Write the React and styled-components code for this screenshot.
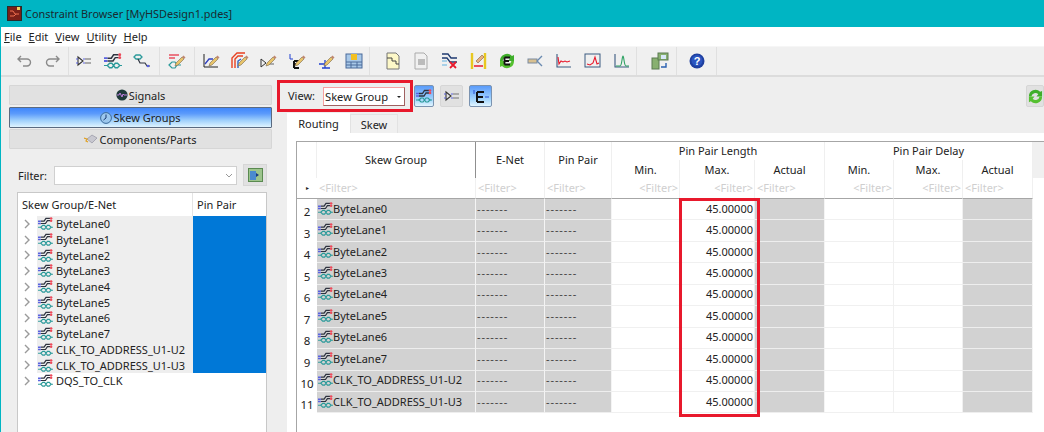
import React from 'react';
import styled, { createGlobalStyle } from 'styled-components';

const GlobalStyle = createGlobalStyle`
  html, body {
    margin: 0;
    padding: 0;
    background: #eee;
    overflow: hidden;
  }
  * { box-sizing: border-box; }
`;

const Window = styled.div`
  width: 1044px;
  height: 432px;
  display: flex;
  flex-direction: column;
  overflow: hidden;
  border-left: 1px solid #00b5c3;
  font-family: "Noto Sans", "Open Sans", sans-serif;
  font-size: 11px;
  color: #222;
  background: #eee;
`;

const TitleBar = styled.div`
  height: 27px;
  margin-left: -1px;
  display: flex;
  align-items: center;
  gap: 3px;
  padding-left: 7px;
  background: #00b5c3;
  color: #1a2a30;
  font-size: 10.9px;
`;

const MenuBar = styled.div`
  height: 19px;
  display: flex;
  align-items: center;
  gap: 7px;
  padding-left: 3px;
  background: #fff;
  u { text-underline-offset: 1px; }
`;

const Toolbar = styled.div`
  height: 31px;
  display: flex;
  align-items: center;
  background: #f0f0f0;
  border-top: 1px solid #f6f6f6;
  border-bottom: 2px solid #dcdcdc;
`;

const ToolGroup = styled.div`
  height: 100%;
  display: flex;
  align-items: center;
  width: ${p => p.$width}px;
  padding-left: ${p => p.$pad}px;
  border-right: 1px solid #e0e0e0;
`;

const ToolButton = styled.div`
  width: 28.6px;
  flex: none;
  display: flex;
  justify-content: center;
  align-items: center;
`;

const Body = styled.div`
  flex: 1;
  display: flex;
  min-height: 0;
`;

const LeftPanel = styled.div`
  width: 279px;
  flex: none;
  display: flex;
  flex-direction: column;
  padding: 8px 8px 0 8px;
`;

const NavButton = styled.div`
  height: ${p => (p.$active ? 21 : 20)}px;
  margin-bottom: ${p => (p.$active ? 1 : 2)}px;
  display: flex;
  align-items: center;
  justify-content: center;
  gap: 1px;
  border-radius: 1px;
  background: ${p => (p.$active
    ? 'linear-gradient(#3f86fb 0%, #5c9bfb 30%, #9fd0fb 65%, #dff4ff 100%)'
    : '#e1e1e1')};
  border: 1px solid ${p => (p.$active ? '#5a6a80' : '#d6d6d6')};
`;

const FilterRow = styled.div`
  display: flex;
  align-items: center;
  margin: 13px 0 6px 9px;
  height: 22px;
`;

const FilterLabel = styled.span`
  width: 36px;
`;

const FilterCombo = styled.div`
  width: 183px;
  height: 19px;
  display: flex;
  align-items: center;
  justify-content: flex-end;
  padding-right: 3px;
  background: #fff;
  border: 1px solid #d0d0d0;
`;

const SquareButton = styled.div`
  width: 24px;
  height: 22px;
  margin-left: 6px;
  display: flex;
  align-items: center;
  justify-content: center;
  background: #e1e1e1;
  border: 1px solid #d6d6d6;
`;

const Tree = styled.div`
  width: 250px;
  margin-left: 8px;
  flex: 1;
  background: #fff;
  border: 1px solid #c8c8c8;
  border-bottom: none;
`;

const TreeHeader = styled.div`
  height: 23px;
  display: flex;
  align-items: center;
  background: #fff;
`;

const TreeHeadCell = styled.div`
  width: ${p => p.$width}px;
  height: 100%;
  display: flex;
  align-items: center;
  padding-left: 4px;
  border-right: ${p => (p.$divide ? '1px solid #e4e4e4' : 'none')};
`;

const TreeRow = styled.div`
  height: 15.7px;
  display: flex;
  align-items: center;
`;

const Chevron = styled.div`
  width: 19px;
  flex: none;
  display: flex;
  justify-content: center;
`;

const TreeName = styled.div`
  width: 156px;
  height: 100%;
  flex: none;
  display: flex;
  align-items: center;
  gap: 3px;
  padding-left: 1px;
  background: ${p => (p.$filled ? '#eeeeee' : 'transparent')};
  white-space: nowrap;
`;

const TreePin = styled.div`
  flex: 1;
  height: 100%;
  background: ${p => (p.$filled ? '#0078d7' : 'transparent')};
`;

const RightPanel = styled.div`
  flex: 1;
  min-width: 0;
  position: relative;
  display: flex;
  flex-direction: column;
  padding-left: 7px;
`;

const ViewRow = styled.div`
  height: 37px;
  display: flex;
  align-items: flex-start;
  padding-top: 8px;
`;

const ViewLabel = styled.span`
  width: 36px;
  line-height: 22px;
  padding-left: 1px;
`;

const ViewCombo = styled.div`
  width: 82px;
  height: 19px;
  margin-top: 2px;
  display: flex;
  align-items: center;
  justify-content: space-between;
  padding: 0 3px 0 1px;
  background: #fff;
  font-size: 11.2px;
  border: 1px solid #f7a0a0;
  border-right-color: #a06060;
  border-bottom-color: #a06060;
`;

const ViewCaret = styled.span`
  width: 0;
  height: 0;
  border-left: 2px solid transparent;
  border-right: 2px solid transparent;
  border-top: 2px solid #222;
`;

const ViewButton = styled.div`
  width: ${p => p.$width || 23}px;
  height: 22px;
  margin-left: ${p => p.$gap}px;
  display: flex;
  align-items: center;
  justify-content: center;
  flex: none;
  border: 1px solid ${p => (p.$on ? '#7b93b0' : '#d6d6d6')};
  border-radius: 2px;
  background: ${p => (p.$on ? 'linear-gradient(#5a9bfb, #a8d8fc 70%, #e2f5ff)' : '#e1e1e1')};
`;

const Spacer = styled.div`
  flex: 1;
`;

const RedBox = styled.div`
  position: absolute;
  left: ${p => p.$left}px;
  top: ${p => p.$top}px;
  width: ${p => p.$width}px;
  height: ${p => p.$height}px;
  border: 3px solid #e8192c;
  pointer-events: none;
`;

const Tabs = styled.div`
  height: 19px;
  display: flex;
  align-items: flex-end;
`;

const Tab = styled.div`
  width: ${p => p.$width}px;
  height: ${p => (p.$active ? 20 : 19)}px;
  display: flex;
  align-items: center;
  justify-content: center;
  background: ${p => (p.$active ? '#fff' : '#f0f0f0')};
  border: ${p => (p.$active ? 'none' : '1px solid #e2e2e2')};
  border-bottom: none;
`;

const TabPane = styled.div`
  flex: 1;
  background: #fff;
  padding: 8px 0 0 9px;
`;

const TableFrame = styled.div`
  position: relative;
  height: 100%;
  border-left: 1px solid #a6a6a6;
  border-top: 1px solid #a6a6a6;
  background: #fff;
`;

const TableGrid = styled.div`
  position: relative;
  display: grid;
  grid-template-columns: 20px 159px 69px 67px 68px 75px 70px 69px 69px 70px;
  grid-template-rows: 18px 18px 21px repeat(10, 21.44px);
`;

const HeaderFill = styled.div`
  position: absolute;
  left: 736px;
  right: 0;
  top: 0;
  height: 36px;
  background: #f0f0f0;
`;

const HeadCell = styled.div`
  grid-column: ${p => p.$col} / span ${p => p.$span || 1};
  grid-row: ${p => p.$row} / span ${p => p.$rows || 1};
  display: flex;
  align-items: center;
  justify-content: center;
  padding-bottom: ${p => (p.$row === 1 ? 2 : 0)}px;
  background: #fff;
  border-right: 1px solid ${p => (p.$strong ? '#8f8f8f' : '#efefef')};
`;

const FilterCell = styled.div`
  grid-column: ${p => p.$col};
  grid-row: 3;
  display: flex;
  align-items: center;
  justify-content: ${p => (p.$right ? 'flex-end' : 'flex-start')};
  padding: 0 1px 2px 2px;
  color: #cfcfcf;
  background: #fff;
  border-right: 1px solid #f0f0f0;
  border-bottom: 1px solid #a6a6a6;
`;

const Corner = styled.div`
  grid-column: 1;
  grid-row: 3;
  display: flex;
  align-items: center;
  justify-content: center;
  font-size: 6px;
  border-bottom: 1px solid #a6a6a6;
`;

const RowNumber = styled.div`
  grid-column: 1;
  display: flex;
  align-items: flex-end;
  justify-content: center;
  padding-bottom: 1px;
  font-size: 11.5px;
`;

const DataCell = styled.div`
  display: flex;
  align-items: center;
  justify-content: ${p => (p.$right ? 'flex-end' : 'flex-start')};
  padding: 0 1px 2px;
  white-space: nowrap;
  overflow: hidden;
  background: ${p => (p.$gray ? '#d2d2d2' : '#fff')};
  border-right: 1px solid ${p => (p.$gray ? '#f4f4f4' : '#f0f0f0')};
  border-bottom: 1px solid ${p => (p.$gray ? '#eeeeee' : '#f0f0f0')};
`;

const Dashes = styled.span`
  letter-spacing: 0.9px;
  color: #444;
`;

const SkewIcon = ({ size = 15 }) => (
  <svg width={size} height={size} viewBox="0 0 16 16" fill="none" style={{ flex: 'none' }}>
    <path d="M3 5.5h3.5l2-3H13M3 8h5l2-3h3" stroke="#2e3440" strokeWidth="1.3" />
    <path d="M0 5.5h3M0 8h3" stroke="#5a62e0" strokeWidth="1.6" />
    <circle cx="14" cy="2.5" r="1.3" fill="#ec4a5a" />
    <circle cx="14" cy="5" r="1.3" fill="#ec4a5a" />
    <path d="M3 12l2-2h2l1.5 2L7 14H5zM8.5 12l1.5-2h2l2 2-2 2h-2z" stroke="#2b9a9a" strokeWidth="1.2" />
    <path d="M0 12h3M14 12h2" stroke="#2b9a9a" />
  </svg>
);

const NetIcon = () => (
  <svg width="16" height="14" viewBox="0 0 16 14" fill="none">
    <path d="M2 3v8l5-4z" stroke="#333" strokeWidth="1.1" />
    <path d="M0 5h2M0 9h2M7 5h2M7 9h2" stroke="#5a62e0" />
    <rect x="9" y="4" width="6" height="2" fill="#aaa" />
    <rect x="9" y="8" width="6" height="2" fill="#aaa" />
  </svg>
);

const EIcon = () => (
  <svg width="16" height="16" viewBox="0 0 16 16" fill="none">
    <path d="M1 2v4" stroke="#2a4fd0" />
    <path d="M12 9h4" stroke="#2a4fd0" />
    <path d="M4 4h7M4 4v10M4 9h6M4 14h7" stroke="#111" strokeWidth="2" />
  </svg>
);

const Pencil = () => (
  <>
    <path d="M8 11l6-6 2 2-6 6-3 1z" fill="#e8c46a" stroke="#7a6a50" strokeWidth=".6" />
    <path d="M14 5l1.5-1.5 2 2L16 7z" fill="#c08870" />
  </>
);

const Drawing = ({ children }) => (
  <svg width="18" height="18" viewBox="0 0 18 18" fill="none">{children}</svg>
);

const UndoIcon = ({ flip }) => (
  <svg width="15" height="12" viewBox="0 0 15 12" fill="none" style={{ transform: flip ? 'scaleX(-1)' : 'none' }}>
    <path d="M4 1L1 4l3 3M1 4h9a3.5 3.5 0 010 7H6" stroke="#8a8a8a" strokeWidth="1.4" />
  </svg>
);

const Wave = ({ d, color = '#e8192c' }) => (
  <Drawing>
    <path d="M2 2v13h14" stroke="#3a5a80" strokeWidth="1.1" />
    <path d={d} stroke={color} strokeWidth="1.1" />
  </Drawing>
);

const Refresh = ({ size = 16, withE }) => (
  <svg width={size} height={size} viewBox="0 0 16 16" fill="none">
    <path d="M1 8a7 7 0 0112-5l2-1v6H9l2-2.4A4.4 4.4 0 003.6 8z" fill="#3fae2a" />
    <path d="M15 8a7 7 0 01-12 5l-2 1V8h6l-2 2.4A4.4 4.4 0 0012.4 8z" fill="#55c030" />
    {withE && <path d="M5.5 4.5H11M5.5 4.5v7M5.5 8H10M5.5 11.5H11" stroke="#111" strokeWidth="1.8" />}
  </svg>
);

const HelpIcon = () => (
  <svg width="16" height="16" viewBox="0 0 16 16">
    <circle cx="8" cy="8" r="7.5" fill="#1f3f9f" />
    <circle cx="8" cy="7.5" r="5.5" fill="#2a55c0" />
    <text x="8" y="12" textAnchor="middle" fontSize="11" fontWeight="700" fill="#fff" fontFamily="Liberation Sans">?</text>
  </svg>
);

const AppLogo = () => (
  <svg width="15" height="15" viewBox="0 0 15 15">
    <rect x=".5" y=".5" width="14" height="14" fill="#7a2018" stroke="#2a2a2a" />
    <path d="M3 5h3l2 3h4M3 10h4l2-2" stroke="#f07050" fill="none" />
    <rect x="10" y="1" width="3" height="3" fill="#f0d060" />
  </svg>
);

const ChevronIcon = () => (
  <svg width="7" height="10" viewBox="0 0 7 10" fill="none">
    <path d="M1 1l4 4-4 4" stroke="#9a9a9a" strokeWidth="1.4" />
  </svg>
);

const DownCaret = () => (
  <svg width="8" height="5" viewBox="0 0 8 5" fill="none">
    <path d="M1 1l3 3 3-3" stroke="#999" />
  </svg>
);

const PanelIcon = () => (
  <svg width="15" height="14" viewBox="0 0 15 14">
    <rect x=".5" y=".5" width="14" height="13" fill="#9cc48c" stroke="#5a8a50" />
    <rect x="2" y="3" width="6" height="9" fill="#4a8ad0" />
    <path d="M8 5l3 2-3 2z" fill="#1a3a80" />
  </svg>
);

const SignalsIcon = () => (
  <svg width="12" height="12" viewBox="0 0 12 12" fill="none">
    <circle cx="6" cy="6" r="5.6" fill="#1f3a3a" />
    <path d="M1 6h2l1-2 2 4 1-3 1 1h3" stroke="#c080e0" />
  </svg>
);

const ClockIcon = () => (
  <svg width="12" height="12" viewBox="0 0 12 12" fill="none">
    <circle cx="6" cy="6" r="5.4" fill="#9cc8ee" stroke="#3a6a9a" />
    <path d="M6 2.5V6L3.5 8" stroke="#1a3a70" />
  </svg>
);

const PartsIcon = () => (
  <svg width="14" height="12" viewBox="0 0 14 12">
    <path d="M3 6l5-4 5 3-5 5z" fill="#c8c8d0" stroke="#8a8a9a" strokeWidth=".6" />
    <path d="M0 5l3 1-1 2 2 1" stroke="#e0a020" fill="none" strokeWidth="1.2" />
  </svg>
);

const groups = [
  { width: 68, pad: 9, items: [<UndoIcon />, <UndoIcon flip />] },
  { width: 91, pad: 1, items: [
    <NetIcon />,
    <SkewIcon size={18} />,
    <Drawing><path d="M2 5l2-2h4l2 2-2 2H4z" stroke="#2b9a9a" strokeWidth="1.3" /><path d="M6 7l2 4h5l2 3h3" stroke="#2e3440" strokeWidth="1.2" /><circle cx="16" cy="14" r="1.3" fill="#5a62e0" /></Drawing>,
  ] },
  { width: 35, pad: 3, items: [<Drawing><path d="M1 3h10M1 6h6" stroke="#e85060" strokeWidth="1.3" /><path d="M1 13l3-3h3l2 3-2 3H4zM9 13h4" stroke="#2b9a9a" strokeWidth="1.2" /><Pencil /></Drawing>] },
  { width: 175, pad: 2, items: [
    <Drawing><path d="M2 2v13h14" stroke="#222" /><path d="M3 12l4-5h4" stroke="#3040c0" strokeWidth="1.3" /><Pencil /></Drawing>,
    <Drawing><path d="M1 16V6l5-5h8M4 16V7l3-3h5" stroke="#e84020" strokeWidth="1.4" /><path d="M7 16V9l3-2" stroke="#3060c0" strokeWidth="1.4" /><Pencil /></Drawing>,
    <Drawing><path d="M2 7v8l5-4z" stroke="#333" /><rect x="9" y="11" width="6" height="2" fill="#aaa" /><Pencil /></Drawing>,
    <Drawing><path d="M2 2v5h3" stroke="#2040d0" /><path d="M6 9h5M6 9v7M6 12h4M6 16h5" stroke="#111" strokeWidth="2" /><Pencil /></Drawing>,
    <Drawing><path d="M2 12h6v4M5 16h8M8 12V8" stroke="#2040d0" strokeWidth="1.3" /><Pencil /></Drawing>,
    <Drawing><rect x="1" y="2" width="16" height="14" fill="#a8c8e8" stroke="#4a6a9a" /><path d="M1 10h16M1 13h16M6 10v6M12 10v6" stroke="#4a6a9a" /><rect x="6" y="2" width="6" height="6" fill="#f4c020" /></Drawing>,
  ] },
  { width: 267, pad: 8.5, items: [
    <Drawing><path d="M3 1h9l3 3v13H3z" fill="#fdf8c8" stroke="#777" /><path d="M3 6h5v3h4v3h3" stroke="#444" /></Drawing>,
    <Drawing><path d="M3 1h9l3 3v13H3z" fill="#f0f0f0" stroke="#aaa" /><rect x="6" y="7" width="7" height="6" fill="#bbb" /></Drawing>,
    <Drawing><path d="M1 2h6l3 4h6M1 6h5l3 4h7" stroke="#1f3a70" strokeWidth="1.3" /><path d="M1 9h5M1 13h5" stroke="#60b0e0" /><path d="M9 10l6 6M15 10l-6 6" stroke="#e8192c" strokeWidth="1.8" /></Drawing>,
    <Drawing><path d="M2 1v16M15 1v16" stroke="#e8c820" strokeWidth="2.4" /><path d="M4 14h9" stroke="#e8192c" strokeWidth="1.5" /><path d="M6 9l6-6 2 2-6 6z" fill="#e8b080" stroke="#806040" strokeWidth=".6" /></Drawing>,
    <Refresh size={16} withE />,
    <Drawing><rect x="1" y="7" width="9" height="4" fill="#d8c090" stroke="#7a8aa0" /><path d="M10 9l5-5M10 9l5 5" stroke="#6a8ab0" strokeWidth="1.4" /></Drawing>,
    <Wave d="M3 5l1 7 2-3 2 1 2-1 2 1 3-1" />,
    <Drawing><rect x="1" y="2" width="15" height="13" stroke="#3a5a80" /><path d="M3 12l3 1 3-2 2-6 2 7 2-1" stroke="#e8192c" strokeWidth="1.1" /></Drawing>,
    <Wave d="M3 14h4c2 0 2-10 3-10s1 10 3 10h3" color="#2aa060" />,
  ] },
  { width: 40, pad: 9, items: [<Drawing><rect x="1" y="6" width="7" height="11" fill="#88b070" stroke="#5a7a50" /><rect x="7" y="1" width="10" height="7" fill="#88b070" stroke="#5a7a50" /><rect x="10" y="3" width="5" height="4" fill="#d8e8f8" /><path d="M10 15h5v-4" stroke="#2a60b0" strokeWidth="1.4" /></Drawing>] },
  { width: 40, pad: 6, items: [<HelpIcon />] },
];

const rows = ['ByteLane0', 'ByteLane1', 'ByteLane2', 'ByteLane3', 'ByteLane4', 'ByteLane5', 'ByteLane6', 'ByteLane7', 'CLK_TO_ADDRESS_U1-U2', 'CLK_TO_ADDRESS_U1-U3'];

const filters = [
  [2, false], [3, false], [4, false], [5, true], [6, true], [7, false], [8, true], [9, true], [10, false],
];

const App = () => (
  <>
    <GlobalStyle />
    <Window>
      <TitleBar>
        <AppLogo />
        Constraint Browser [MyHSDesign1.pdes]
      </TitleBar>
      <MenuBar>
        <span><u>F</u>ile</span>
        <span><u>E</u>dit</span>
        <span><u>V</u>iew</span>
        <span><u>U</u>tility</span>
        <span><u>H</u>elp</span>
      </MenuBar>
      <Toolbar>
        {groups.map((g, i) => (
          <ToolGroup key={i} $width={g.width} $pad={g.pad}>
            {g.items.map((item, j) => <ToolButton key={j}>{item}</ToolButton>)}
          </ToolGroup>
        ))}
      </Toolbar>
      <Body>
        <LeftPanel>
          <NavButton><SignalsIcon />Signals</NavButton>
          <NavButton $active><ClockIcon />Skew Groups</NavButton>
          <NavButton><PartsIcon />Components/Parts</NavButton>
          <FilterRow>
            <FilterLabel>Filter:</FilterLabel>
            <FilterCombo><DownCaret /></FilterCombo>
            <SquareButton><PanelIcon /></SquareButton>
          </FilterRow>
          <Tree>
            <TreeHeader>
              <TreeHeadCell $width={175} $divide>Skew Group/E-Net</TreeHeadCell>
              <TreeHeadCell $width={73}>Pin Pair</TreeHeadCell>
            </TreeHeader>
            {[...rows, 'DQS_TO_CLK'].map((name, i) => (
              <TreeRow key={name}>
                <Chevron><ChevronIcon /></Chevron>
                <TreeName $filled={i < 10}><SkewIcon />{name}</TreeName>
                <TreePin $filled={i < 10} />
              </TreeRow>
            ))}
          </Tree>
        </LeftPanel>
        <RightPanel>
          <ViewRow>
            <ViewLabel>View:</ViewLabel>
            <ViewCombo>Skew Group<ViewCaret /></ViewCombo>
            <ViewButton $on $gap={9} $width={20}><SkewIcon size={16} /></ViewButton>
            <ViewButton $gap={6}><NetIcon /></ViewButton>
            <ViewButton $on $gap={6}><EIcon /></ViewButton>
            <Spacer />
            <ViewButton $gap={0} $width={18}><Refresh size={15} /></ViewButton>
          </ViewRow>
          <Tabs>
            <Tab $active $width={63}>Routing</Tab>
            <Tab $width={48}>Skew</Tab>
          </Tabs>
          <TabPane>
            <TableFrame>
              <HeaderFill />
              <TableGrid>
                <HeadCell $col={1} $row={1} $rows={2} />
                <HeadCell $col={2} $row={1} $rows={2} $strong>Skew Group</HeadCell>
                <HeadCell $col={3} $row={1} $rows={2}>E-Net</HeadCell>
                <HeadCell $col={4} $row={1} $rows={2}>Pin Pair</HeadCell>
                <HeadCell $col={5} $row={1} $span={3}>Pin Pair Length</HeadCell>
                <HeadCell $col={5} $row={2}>Min.</HeadCell>
                <HeadCell $col={6} $row={2}>Max.</HeadCell>
                <HeadCell $col={7} $row={2}>Actual</HeadCell>
                <HeadCell $col={8} $row={1} $span={3}>Pin Pair Delay</HeadCell>
                <HeadCell $col={8} $row={2}>Min.</HeadCell>
                <HeadCell $col={9} $row={2}>Max.</HeadCell>
                <HeadCell $col={10} $row={2}>Actual</HeadCell>
                <Corner>▸</Corner>
                {filters.map(([col, right]) => (
                  <FilterCell key={col} $col={col} $right={right}>&lt;Filter&gt;</FilterCell>
                ))}
                {rows.map((name, i) => (
                  <React.Fragment key={name}>
                    <RowNumber>{i + 2}</RowNumber>
                    <DataCell $gray><SkewIcon />{name}</DataCell>
                    <DataCell $gray><Dashes>-------</Dashes></DataCell>
                    <DataCell $gray><Dashes>-------</Dashes></DataCell>
                    <DataCell />
                    <DataCell $right>45.00000</DataCell>
                    <DataCell $gray />
                    <DataCell />
                    <DataCell />
                    <DataCell $gray />
                  </React.Fragment>
                ))}
              </TableGrid>
            </TableFrame>
          </TabPane>
          <RedBox $left={-3} $top={3} $width={136} $height={32} />
          <RedBox $left={399} $top={121} $width={81} $height={219} />
        </RightPanel>
      </Body>
    </Window>
  </>
);

export default App;
